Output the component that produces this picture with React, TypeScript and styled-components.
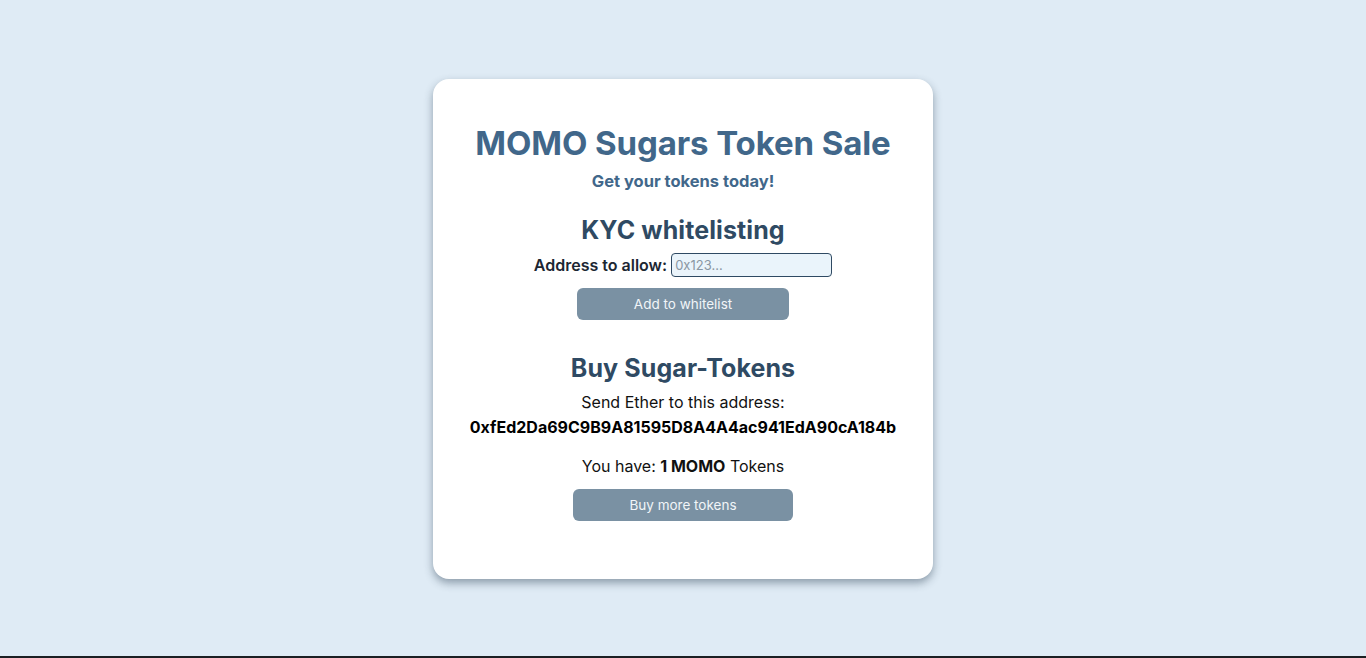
import React from "react";
import styled, { createGlobalStyle } from "styled-components";

const Global = createGlobalStyle`
  html, body { margin: 0; padding: 0; }
  body {
    background: #dfebf5;
    font-family: "Inter", "Noto Sans", sans-serif;
    min-height: 658px;
    box-sizing: border-box;
    border-bottom: 2px solid #1b1f23;
  }
`;

const Page = styled.div`
  display: flex;
  justify-content: center;
  padding-top: 79px;
`;

const Card = styled.div`
  width: 500px;
  height: 500px;
  box-sizing: border-box;
  background: #fff;
  border-radius: 16px;
  box-shadow: 0 4px 8px rgba(40, 60, 80, 0.45);
  display: flex;
  flex-direction: column;
  align-items: center;
  padding-top: 41px;
`;

const Title = styled.h1`
  margin: 0;
  font-size: 33px;
  font-weight: 700;
  color: #41678a;
  line-height: 46px;
  letter-spacing: -0.1px;
`;

const Subtitle = styled.p`
  margin: 4px 0 0;
  font-size: 16.5px;
  font-weight: 700;
  color: #41678a;
  line-height: 22px;
`;

const Heading = styled.h2<{ $top: number }>`
  margin: ${(p) => p.$top}px 0 0;
  font-size: 25px;
  font-weight: 700;
  color: #2f4a63;
  line-height: 34px;
  letter-spacing: 0.1px;
`;

const Row = styled.div`
  display: flex;
  align-items: center;
  gap: 4px;
  margin-top: 6px;
`;

const Label = styled.label`
  font-size: 16px;
  font-weight: 600;
  color: #1c2733;
`;

const Input = styled.input`
  width: 161px;
  height: 24px;
  box-sizing: border-box;
  background: #eaf4fb;
  border: 1px solid #2f4a63;
  border-radius: 4px;
  font-family: "Inter", sans-serif;
  font-size: 13px;
  padding: 0 3px;
  color: #333;
  &::placeholder { color: #8a97a3; }
`;

const Button = styled.button<{ $w: number; $top: number }>`
  width: ${(p) => p.$w}px;
  height: 32px;
  margin-top: ${(p) => p.$top}px;
  background: #7a91a3;
  color: #f1f5f8;
  border: none;
  border-radius: 6px;
  font-family: "Inter", sans-serif;
  font-size: 13.5px;
  font-weight: 400;
`;

const Text = styled.p<{ $top: number }>`
  margin: ${(p) => p.$top}px 0 0;
  font-size: 16px;
  font-weight: 400;
  color: #111;
  line-height: 25px;
`;

const Address = styled.p`
  margin: 0;
  font-size: 16px;
  font-weight: 700;
  color: #000;
  line-height: 25px;
`;

export default function App() {
  return (
    <>
      <Global />
      <Page>
        <Card>
          <Title>MOMO Sugars Token Sale</Title>
          <Subtitle>Get your tokens today!</Subtitle>
          <Heading $top={21}>KYC whitelisting</Heading>
          <Row>
            <Label htmlFor="addr">Address to allow:</Label>
            <Input id="addr" placeholder="0x123..." />
          </Row>
          <Button $w={212} $top={11}>Add to whitelist</Button>
          <Heading $top={31}>Buy Sugar-Tokens</Heading>
          <Text $top={5}>Send Ether to this address:</Text>
          <Address>0xfEd2Da69C9B9A81595D8A4A4ac941EdA90cA184b</Address>
          <Text $top={14}>
            You have: <b>1 MOMO</b> Tokens
          </Text>
          <Button $w={220} $top={10}>Buy more tokens</Button>
        </Card>
      </Page>
    </>
  );
}
